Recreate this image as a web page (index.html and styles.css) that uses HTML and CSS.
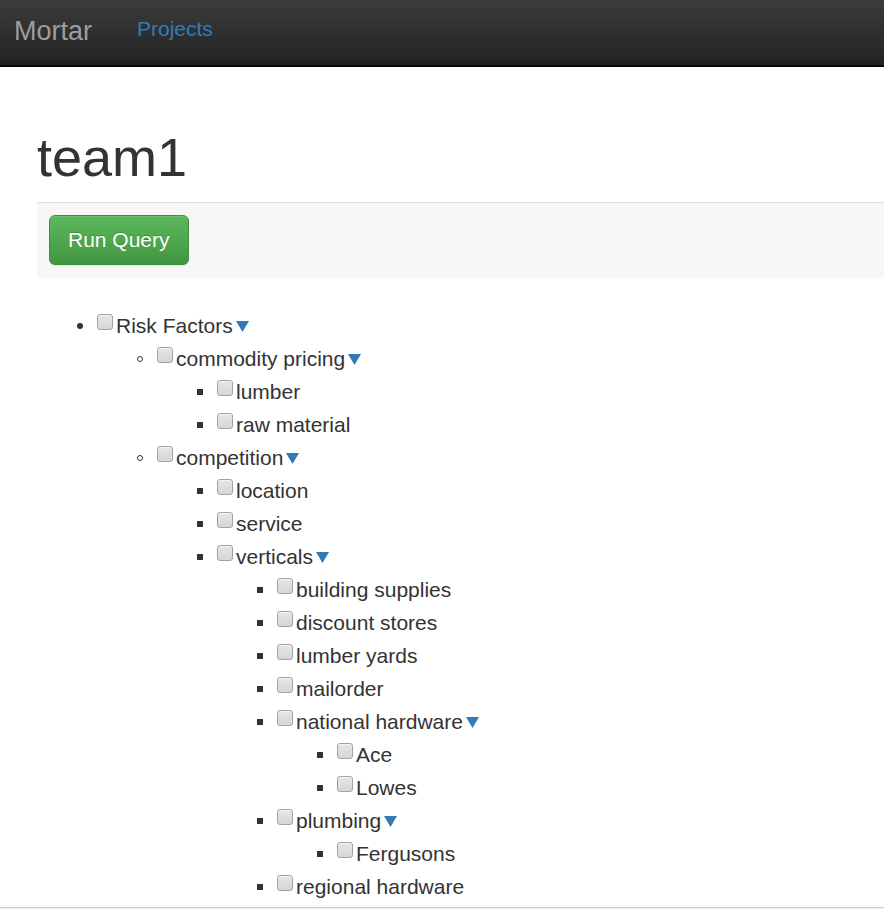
FILE: index.html
```html
<!DOCTYPE html>
<html>
<head>
<meta charset="utf-8">
<title>Mortar</title>
<link rel="stylesheet" href="styles.css">
</head>
<body>
<nav class="navbar">
  <a class="brand" href="#">Mortar</a>
  <a class="nav-link" href="#">Projects</a>
</nav>
<main class="container">
  <h1 class="title">team1</h1>
  <div class="panel">
    <button class="btn-success" type="button">Run Query</button>
  </div>
  <ul class="tree">
    <li><input type="checkbox" class="cb">Risk Factors<svg class="caret" width="13" height="11" viewBox="0 0 13 11"><path d="M0 0H13L6.5 11Z"/></svg>
      <ul class="lvl2">
        <li><input type="checkbox" class="cb">commodity pricing<svg class="caret" width="13" height="11" viewBox="0 0 13 11"><path d="M0 0H13L6.5 11Z"/></svg>
          <ul class="lvl3">
            <li><input type="checkbox" class="cb">lumber</li>
            <li><input type="checkbox" class="cb">raw material</li>
          </ul>
        </li>
        <li><input type="checkbox" class="cb">competition<svg class="caret" width="13" height="11" viewBox="0 0 13 11"><path d="M0 0H13L6.5 11Z"/></svg>
          <ul class="lvl3">
            <li><input type="checkbox" class="cb">location</li>
            <li><input type="checkbox" class="cb">service</li>
            <li><input type="checkbox" class="cb">verticals<svg class="caret" width="13" height="11" viewBox="0 0 13 11"><path d="M0 0H13L6.5 11Z"/></svg>
              <ul class="lvl3">
                <li><input type="checkbox" class="cb">building supplies</li>
                <li><input type="checkbox" class="cb">discount stores</li>
                <li><input type="checkbox" class="cb">lumber yards</li>
                <li><input type="checkbox" class="cb">mailorder</li>
                <li><input type="checkbox" class="cb">national hardware<svg class="caret" width="13" height="11" viewBox="0 0 13 11"><path d="M0 0H13L6.5 11Z"/></svg>
                  <ul class="lvl3">
                    <li><input type="checkbox" class="cb">Ace</li>
                    <li><input type="checkbox" class="cb">Lowes</li>
                  </ul>
                </li>
                <li><input type="checkbox" class="cb">plumbing<svg class="caret" width="13" height="11" viewBox="0 0 13 11"><path d="M0 0H13L6.5 11Z"/></svg>
                  <ul class="lvl3">
                    <li><input type="checkbox" class="cb">Fergusons</li>
                  </ul>
                </li>
                <li><input type="checkbox" class="cb">regional hardware</li>
              </ul>
            </li>
          </ul>
        </li>
      </ul>
    </li>
  </ul>
</main>
<div class="hscroll"></div>
</body>
</html>
```

FILE: styles.css
```css
html, body {
  margin: 0;
  padding: 0;
}
body {
  font-family: "Liberation Sans", Arial, Helvetica, sans-serif;
  font-size: 21px;
  line-height: 30px;
  color: #333;
  background: #fff;
  overflow: hidden;
}
.navbar {
  display: flex;
  align-items: flex-start;
  height: 65px;
  background-image: linear-gradient(to bottom, #3c3c3c 0, #222 100%);
  border-bottom: 2px solid #080808;
  box-sizing: content-box;
}
.brand {
  display: block;
  font-size: 27px;
  line-height: 30px;
  padding: 16px 0 0 14px;
  color: #9d9d9d;
  text-decoration: none;
}
.nav-link {
  display: block;
  font-size: 21px;
  line-height: 30px;
  padding: 14px 0 0 45px;
  color: #337ab7;
  text-decoration: none;
}
.container {
  padding: 0 0 0 37px;
}
.title {
  margin: 61px 0 15px 0;
  font-size: 54px;
  line-height: 1.1;
  font-weight: 500;
  color: #333;
}
.panel {
  border-top: 1px solid #ddd;
  background: #f7f7f7;
  padding: 12px 12px 13px 12px;
  margin-bottom: 31px;
}
.btn-success {
  font-family: inherit;
  font-size: 21px;
  line-height: 30px;
  padding: 9px 18px;
  color: #fff;
  border: 1px solid #3e8f3e;
  border-radius: 6px;
  background-image: linear-gradient(to bottom, #5cb85c 0, #419641 100%);
  text-shadow: 0 -1px 0 rgba(0, 0, 0, .2);
  box-shadow: inset 0 1px 0 rgba(255, 255, 255, .15), 0 1px 1px rgba(0, 0, 0, .075);
  cursor: pointer;
}
.tree,
.lvl2,
.lvl3 {
  margin: 0;
  list-style: none;
}
.tree {
  padding-left: 56px;
  line-height: 33px;
}
.lvl2,
.lvl3 {
  padding-left: 60px;
}
.tree li::before {
  content: "";
  display: inline-block;
  box-sizing: border-box;
  width: 6px;
  height: 6px;
  margin-left: -16px;
  margin-right: 10px;
  vertical-align: 4px;
}
.tree > li::before {
  background: #333;
  border-radius: 50%;
}
.lvl2 > li::before {
  border: 1px solid #333;
  border-radius: 50%;
  background: transparent;
}
.lvl3 > li::before {
  background: #333;
  border-radius: 0;
}
.cb {
  appearance: none;
  -webkit-appearance: none;
  display: inline-block;
  width: 16px;
  height: 16px;
  margin: 3px 3px 3px 4px;
  box-sizing: border-box;
  border: 1px solid #a2a2a2;
  border-radius: 3px;
  background-image: linear-gradient(to bottom, #e6e6e6 0, #d6d6d6 100%);
  box-shadow: inset 0 1px 0 rgba(255, 255, 255, .6);
  vertical-align: baseline;
}
.caret {
  fill: #337ab7;
  margin-left: 3px;
  vertical-align: 1px;
}
.hscroll {
  position: fixed;
  left: 0;
  right: 0;
  bottom: 0;
  height: 1px;
  border-top: 1px solid #cfcfcf;
  background: #efefef;
}
```
